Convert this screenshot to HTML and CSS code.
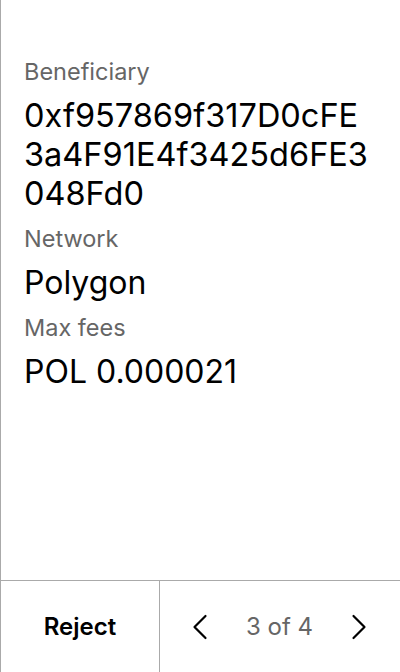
FILE: index.html
```html
<!DOCTYPE html>
<html lang="en">
<head>
<meta charset="utf-8">
<title>Review</title>
<link rel="stylesheet" href="styles.css">
</head>
<body>
<div class="screen">
  <main class="details">
    <div class="field">
      <div class="label">Beneficiary</div>
      <div class="value address">0xf957869f317D0cFE3a4F91E4f3425d6FE3048Fd0</div>
    </div>
    <div class="field">
      <div class="label">Network</div>
      <div class="value">Polygon</div>
    </div>
    <div class="field">
      <div class="label">Max fees</div>
      <div class="value">POL 0.000021</div>
    </div>
  </main>
  <footer class="footer">
    <button class="reject" type="button">Reject</button>
    <div class="pager">
      <button class="nav" type="button" aria-label="Previous">
        <svg width="16" height="26" viewBox="0 0 16 26"><polyline points="13.5,2 2.5,13 13.5,24" fill="none" stroke="#000" stroke-width="2.2" stroke-linecap="round" stroke-linejoin="round"/></svg>
      </button>
      <span class="count">3 of 4</span>
      <button class="nav" type="button" aria-label="Next">
        <svg width="16" height="26" viewBox="0 0 16 26"><polyline points="2.5,2 13.5,13 2.5,24" fill="none" stroke="#000" stroke-width="2.2" stroke-linecap="round" stroke-linejoin="round"/></svg>
      </button>
    </div>
  </footer>
</div>
</body>
</html>
```
FILE: styles.css
```css
* { box-sizing: border-box; }
html, body { margin: 0; padding: 0; background: #fff; }
body { font-family: Inter, "Noto Sans", sans-serif; color: #000; }
.screen {
  width: 400px;
  height: 672px;
  border-left: 1px solid #aaa;
  display: flex;
  flex-direction: column;
}
.details {
  flex: 1;
  padding: 58px 28px 0 23px;
  display: flex;
  flex-direction: column;
  gap: 12px;
}
.field { display: flex; flex-direction: column; gap: 10px; }
.label { font-size: 23.5px; line-height: 28px; color: #666; }
.value { font-size: 32px; line-height: 39px; }
.address { font-size: 32.5px; word-break: break-all; }
.footer {
  height: 92px;
  border-top: 1px solid #aaa;
  display: flex;
}
.reject {
  width: 159px;
  border: 0;
  border-right: 1px solid #aaa;
  background: none;
  font-family: inherit;
  font-size: 24px;
  font-weight: 600;
  color: #000;
  padding: 0;
}
.pager {
  flex: 1;
  display: flex;
  align-items: center;
  justify-content: space-between;
  padding: 0 25px 0 24px;
}
.nav {
  width: 32px;
  height: 32px;
  border: 0;
  background: none;
  padding: 0;
  display: flex;
  align-items: center;
  justify-content: center;
}
.count { font-size: 24px; color: #666; }
```
